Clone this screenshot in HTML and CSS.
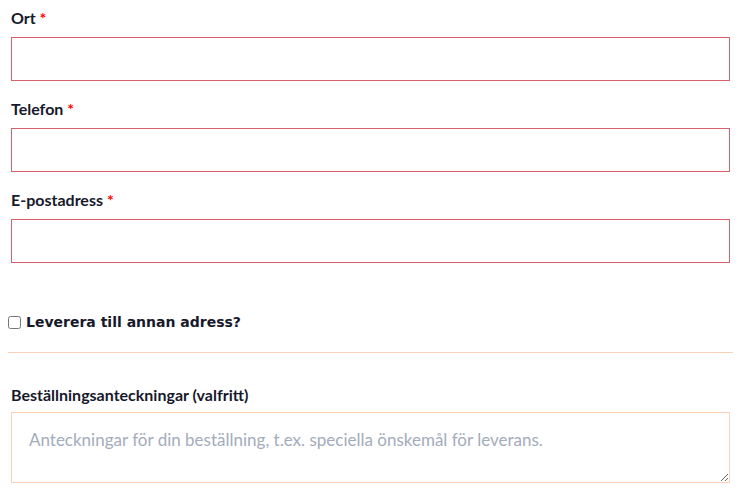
FILE: index.html
```html
<!DOCTYPE html>
<html lang="sv">
<head>
<meta charset="utf-8">
<link rel="stylesheet" href="styles.css">
</head>
<body>
<div class="wrap">
  <p class="row">
    <label class="lbl">Ort <abbr class="req">*</abbr></label>
    <input class="field" type="text">
  </p>
  <p class="row">
    <label class="lbl">Telefon <abbr class="req">*</abbr></label>
    <input class="field" type="text">
  </p>
  <p class="row">
    <label class="lbl">E-postadress <abbr class="req">*</abbr></label>
    <input class="field" type="text">
  </p>
  <h3 class="ship">
    <input class="cb" type="checkbox">
    <span>Leverera till annan adress?</span>
  </h3>
  <p class="row notes">
    <label class="lbl">Beställningsanteckningar (valfritt)</label>
    <textarea class="area" placeholder="Anteckningar för din beställning, t.ex. speciella önskemål för leverans."></textarea>
  </p>
</div>
</body>
</html>
```

FILE: styles.css
```css
html, body {
  margin: 0;
  padding: 0;
  background: #ffffff;
}
.wrap {
  width: 725px;
  padding: 0 0 0 8px;
  font-family: Lato, "Liberation Sans", sans-serif;
}
.row {
  margin: 0;
  padding: 3px;
  display: flex;
  flex-direction: column;
}
.lbl {
  font-size: 16px;
  font-weight: 700;
  color: #17192b;
  line-height: 20px;
  padding-top: 5px;
  margin-bottom: 9px;
}
.req {
  color: #ff0000;
  text-decoration: none;
  font-weight: 700;
}
.field {
  box-sizing: border-box;
  height: 44px;
  width: 100%;
  margin: 0 0 7px;
  border: 1px solid #d9606c;
  border-radius: 0;
  background: #fff;
  outline: none;
}
.ship {
  margin: 41px 0 0;
  padding: 0 0 22px;
  display: flex;
  align-items: center;
  gap: 5px;
  font-family: "DejaVu Sans", sans-serif;
  font-size: 14px;
  font-weight: 700;
  color: #17192b;
  border-bottom: 1px solid #fdd0b8;
}
.cb {
  margin: 0;
  width: 13px;
  height: 13px;
}
.notes {
  padding-top: 32px;
}
.notes .lbl {
  padding-top: 0;
  margin-bottom: 7px;
}
.area {
  box-sizing: border-box;
  width: 100%;
  height: 71px;
  border: 1px solid #fdd0b8;
  padding: 16px 17px;
  font-family: Lato, "Liberation Sans", sans-serif;
  font-size: 17px;
  color: #333;
  outline: none;
}
.area::placeholder {
  color: #a3acbb;
}
```
